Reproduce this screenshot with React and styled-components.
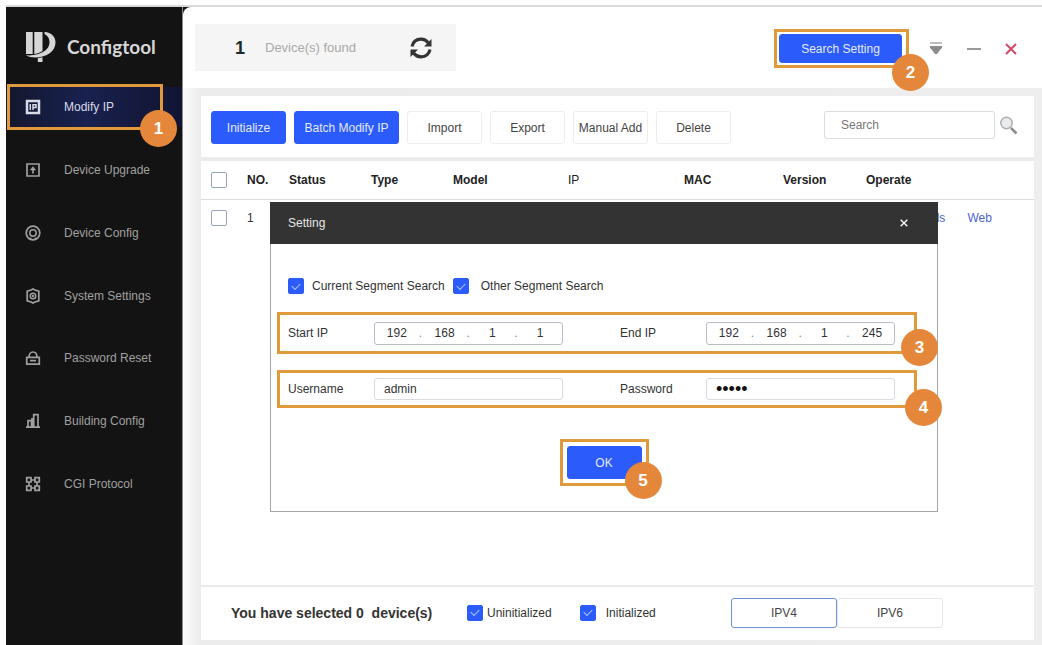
import React from "react";
import styled, { createGlobalStyle, css } from "styled-components";

const BLUE = "#2b5bfb";
const AMBER = "#e09a3c";

const GlobalStyle = createGlobalStyle`
  *, *::before, *::after { box-sizing: border-box; }
  body {
    margin: 0;
    background: #fff;
    font-family: "Liberation Sans", Arial, sans-serif;
    font-size: 12px;
    line-height: 16px;
    color: #333;
  }
  button, input { font: inherit; color: inherit; }
  button { cursor: pointer; }
  a { color: inherit; text-decoration: none; }
`;

const Page = styled.div`
  min-height: 100vh;
  padding: 5px 0 0 6px;
  display: flex;
`;

const Window = styled.div`
  flex: 1;
  display: flex;
  background: #131313;
  border-top: 2px solid #d9d9d9;
`;

/* ---------- Sidebar ---------- */

const Sidebar = styled.aside`
  width: 177px;
  flex: none;
  background: #131313;
  border-right: 1px solid #8a8a8a;
  color: #a0a0a0;
`;

const Brand = styled.div`
  height: 69px;
  padding: 10px 0 0 20px;
  display: flex;
  align-items: center;
  gap: 11px;
  color: #d6d6d6;
  font-family: Lato, "Liberation Sans", sans-serif;
  font-size: 19px;
  font-weight: 700;
  line-height: 24px;
`;

const Nav = styled.nav`
  height: 439px;
  display: flex;
  flex-direction: column;
`;

const NavRow = styled.div`
  flex: 1;
  display: flex;
  align-items: center;
`;

const NavLink = styled.a`
  position: relative;
  flex: 1;
  height: 40px;
  padding-left: 19px;
  display: flex;
  align-items: center;
  gap: 23px;
  ${(p) =>
    p.$active &&
    css`
      color: #d8dae6;
      background: linear-gradient(90deg, #14172e 0%, #18214f 45%, #14183a 80%, #101536 100%);
    `}
`;

/* ---------- Callouts ---------- */

const Frame = styled.span`
  position: absolute;
  inset: ${(p) => p.$inset};
  border: 3px solid ${AMBER};
  pointer-events: none;
`;

const Badge = styled.span`
  position: absolute;
  right: ${(p) => p.$right || "-20px"};
  bottom: ${(p) => p.$bottom || "-20px"};
  width: 37px;
  height: 37px;
  border-radius: 50%;
  background: #e5873a;
  color: #fff;
  font-size: 17px;
  font-weight: 700;
  line-height: 37px;
  text-align: center;
  z-index: 2;
`;

/* ---------- Main ---------- */

const Main = styled.main`
  flex: 1;
  min-width: 0;
  display: flex;
  flex-direction: column;
  background: #fff;
  border-top-left-radius: 8px;
`;

const TopBar = styled.header`
  height: 81px;
  padding: 2px 25px 0 12px;
  display: flex;
  align-items: center;
`;

const FoundBox = styled.div`
  width: 261px;
  height: 47px;
  margin-bottom: 2px;
  padding: 0 24px 0 40px;
  display: flex;
  align-items: center;
  background: #f5f5f5;
`;

const Count = styled.strong`
  width: 30px;
  font-size: 18px;
  color: #1d2b2b;
`;

const FoundLabel = styled.span`
  flex: 1;
  font-size: 13px;
  color: #a9a9a9;
`;

const IconButton = styled.button`
  display: flex;
  align-items: center;
  justify-content: center;
  padding: 0;
  border: 0;
  background: none;
  color: ${(p) => p.$color || "#333"};
`;

const WindowTools = styled.div`
  margin-left: auto;
  display: flex;
  align-items: center;
  gap: 27px;
`;

const WindowButtons = styled.div`
  display: flex;
  gap: 24px;
`;

const Marked = styled.div`
  position: relative;
  display: flex;
`;

const Button = styled.button`
  height: ${(p) => p.$height || 33}px;
  width: ${(p) => p.$width || 75}px;
  padding: 0;
  border-radius: 3px;
  border: 1px solid #ededed;
  background: #fff;
  color: #444;
  ${(p) =>
    p.$primary &&
    css`
      border-color: ${BLUE};
      background: ${BLUE};
      color: #e4eaff;
    `}
`;

const Content = styled.div`
  flex: 1;
  padding: 8px 8px 5px 18px;
  display: flex;
  background: linear-gradient(90deg, #fafafa 0, #ececec 18px, #eeeeee 100%);
`;

const Panel = styled.section`
  position: relative;
  flex: 1;
  min-width: 0;
  display: flex;
  flex-direction: column;
  background: #fff;
`;

const Toolbar = styled.div`
  height: 65px;
  padding: 15px 16px 0 10px;
  display: flex;
  align-items: flex-start;
  gap: 8px;
  border-bottom: 4px solid #ebebeb;
`;

const SearchBox = styled.form`
  margin-left: auto;
  display: flex;
  align-items: center;
  gap: 4px;
`;

const TextInput = styled.input`
  width: ${(p) => p.$width || 189}px;
  height: ${(p) => p.$height || 22}px;
  padding: 0 9px;
  border: 1px solid #d8dbe0;
  border-radius: 3px;
  background: #fff;
  outline: none;
`;

const SearchInput = styled(TextInput)`
  padding: 0 16px;
  &::placeholder { color: #777; opacity: 1; }
`;

const PasswordInput = styled(TextInput)`
  font-size: 18px;
  color: #111;
`;

const Table = styled.table`
  width: 100%;
  table-layout: fixed;
  border-collapse: collapse;
  th, td { padding: 0; text-align: left; white-space: nowrap; }
  th { height: 38px; color: #222; }
  thead tr { border-bottom: 1px solid #dcdcdc; }
  td { height: 37px; }
  th:first-child, td:first-child { padding-left: 10px; }
`;

const PlainHead = styled.th`
  font-weight: 400;
`;

const Links = styled.div`
  display: flex;
  gap: 22px;
  color: #4a63d6;
`;

const Check = styled.input`
  appearance: none;
  flex: none;
  display: inline-grid;
  place-items: center;
  vertical-align: middle;
  width: 16px;
  height: 16px;
  margin: 0;
  border: 1px solid #98a2b8;
  border-radius: 2px;
  background: #fff;
  &:checked { border-color: ${BLUE}; background: ${BLUE}; }
  &:checked::after {
    content: "";
    width: 8px;
    height: 5px;
    margin-bottom: 2px;
    border: solid #b9c9ff;
    border-width: 0 0 1px 1px;
    transform: rotate(-45deg);
  }
`;

const CheckLabel = styled.label`
  display: flex;
  align-items: center;
  gap: ${(p) => p.$gap || 10}px;
`;

const Footer = styled.footer`
  height: 55px;
  margin-top: auto;
  padding: 0 91px 2px 30px;
  display: flex;
  align-items: center;
  border-top: 2px solid #e9e9e9;
`;

const Summary = styled.strong`
  width: 236px;
  font-size: 14px;
  white-space: pre;
`;

const FilterGroup = styled.div`
  display: flex;
  gap: 28px;
`;

const Segments = styled.div`
  margin-left: auto;
  display: flex;
`;

const Segment = styled(Button)`
  border-color: ${(p) => (p.$on ? "#6f8fd8" : "#e6e6e6")};
`;

/* ---------- Dialog ---------- */

const Dialog = styled.div`
  position: absolute;
  top: 106px;
  left: 69px;
  right: 96px;
  height: 310px;
  border: 1px solid #a5a5a5;
  background: #fff;
`;

const DialogHead = styled.div`
  height: 42px;
  margin: -1px -1px 0;
  padding: 0 30px 0 18px;
  display: flex;
  align-items: center;
  justify-content: space-between;
  background: #333;
  color: #e6e6e6;
`;

const DialogChecks = styled.div`
  padding: 34px 0 18px 17px;
  display: flex;
  gap: 8px;
`;

const FieldRow = styled.div`
  height: ${(p) => p.$height}px;
  margin: 0 20px 16px 6px;
  padding: 0 19px 0 8px;
  position: relative;
  display: flex;
  align-items: center;
  justify-content: space-between;
  border: 3px solid ${AMBER};
`;

const Field = styled.div`
  display: flex;
  align-items: center;
  > label { width: 86px; }
`;

const IpBox = styled.div`
  width: 189px;
  height: 23px;
  display: flex;
  align-items: center;
  border: 1px solid #b9bdc9;
  border-radius: 3px;
  span { width: 4px; color: #888; }
`;

const Octet = styled.input`
  flex: 1;
  min-width: 0;
  width: 20px;
  height: 18px;
  padding: 0;
  border: 0;
  outline: none;
  background: none;
  text-align: center;
`;

const DialogFoot = styled.div`
  padding-top: 22px;
  display: flex;
  justify-content: center;
`;

/* ---------- Icons ---------- */

const Logo = () => (
  <svg width="30" height="32" viewBox="0 0 30 32" fill="currentColor" aria-hidden="true">
    <path d="M0 1h6.700v22H0z" />
    <path d="M8.300 1h8.200v30h-4.700v-8H8.300z" />
    <path
      d="M18.500 1C25.500 1.500 29.500 5.500 29.500 11.500 29.500 20 21 26.500 9 26.500 5.500 26.500 2.500 25.800 0 24.300c4 .4 8 0 11.500-1C19 21 23.500 17 23.500 11.300c0-3.800-1.800-6.800-5-8.300z"
      stroke="#131313"
      strokeWidth="1.600"
      paintOrder="stroke"
    />
  </svg>
);

const navProps = {
  width: 16,
  height: 16,
  viewBox: "0 0 16 16",
  fill: "none",
  stroke: "currentColor",
  strokeWidth: 1.5,
  "aria-hidden": true,
};

const IpIcon = () => (
  <svg {...navProps}>
    <path d="M2 2h12v12H2z" strokeWidth="2.500" />
    <path d="M5.300 5v6M8 11V5.700h3v2.800H8" />
  </svg>
);
const UpgradeIcon = () => (
  <svg {...navProps}>
    <path d="M2 2h12v12H2zM8 11.500V6" strokeWidth="1.700" />
    <path d="M8 4.200l3.200 4H4.800z" fill="currentColor" stroke="none" />
  </svg>
);
const ConfigIcon = () => (
  <svg {...navProps}>
    <circle cx="8" cy="8" r="6.800" strokeWidth="1.700" />
    <circle cx="8" cy="8" r="3.200" />
    <path d="M3.500 13.500h3M9.500 13.500h3" />
  </svg>
);
const SettingsIcon = () => (
  <svg {...navProps}>
    <path d="M8 1l2 1 3.800 1.200v9.600L10 14l-2 1-2-1-3.800-1.200V3.200L6 2z" strokeWidth="1.700" />
    <circle cx="8" cy="8" r="2.800" />
    <circle cx="8" cy="8" r=".5" />
  </svg>
);
const LockIcon = () => (
  <svg {...navProps}>
    <path d="M1.700 7.300h12.600v6.900H1.700zM4 7.300C4 4 5.500 2 8 2s4 2 4 5.300M5 10.700h6" strokeWidth="1.700" />
  </svg>
);
const BuildingIcon = () => (
  <svg {...navProps}>
    <path d="M8.700 1.700h4.300v12.300H8.700zM3 7.700h3.500V14H3zM1 14.200h14M7 5v9" strokeWidth="1.700" />
  </svg>
);
const ProtocolIcon = () => (
  <svg {...navProps}>
    <path d="M1.700 1.700H6V6H1.700zM10 1.700h4.300V6H10zM1.700 10H6v4.300H1.700zM10 10h4.300v4.300H10zM6 4h4M6 12h4M4 6v4M12 6v4" strokeWidth="1.700" />
  </svg>
);

const RefreshIcon = () => (
  <svg width="22" height="22" viewBox="0 0 22 22" aria-hidden="true">
    <g fill="none" stroke="#333" strokeWidth="3.200">
      <path d="M2 9.500C3 5 6.500 2.200 11 2.200c3 0 5.500 1.300 7.200 3.600" />
      <path d="M20 12.500c-1 4.500-4.500 7.300-9 7.300-3 0-5.500-1.300-7.200-3.600" />
    </g>
    <path d="M21.500 2v7.500H14zM.5 20v-7.500H8z" fill="#333" />
  </svg>
);

const DropIcon = () => (
  <svg width="14" height="13" viewBox="0 0 14 13" aria-hidden="true">
    <path d="M1 1h12" stroke="#aaa" strokeWidth="1.500" />
    <path d="M1 4h12v1.500L8 12H6L1 5.500z" fill="#8c8c8c" />
  </svg>
);

const MinusIcon = () => (
  <svg width="14" height="12" viewBox="0 0 14 12" aria-hidden="true">
    <path d="M0 6h14" stroke="#999" strokeWidth="2" />
  </svg>
);

const CloseIcon = ({ size = 12, width = 2 }) => (
  <svg width={size} height={size} viewBox="0 0 12 12" aria-hidden="true">
    <path d="M1 1l10 10M11 1 1 11" stroke="currentColor" strokeWidth={width} />
  </svg>
);

const SearchIcon = () => (
  <svg width="19" height="19" viewBox="0 0 19 19" fill="none" aria-hidden="true">
    <path d="M12 12l5.500 5.500" stroke="#8b8b8b" strokeWidth="2.500" />
    <circle cx="7.500" cy="7" r="5.700" fill="#e9ebed" stroke="#adadad" strokeWidth="1.500" />
  </svg>
);

/* ---------- Data ---------- */

const navItems = [
  ["Modify IP", IpIcon],
  ["Device Upgrade", UpgradeIcon],
  ["Device Config", ConfigIcon],
  ["System Settings", SettingsIcon],
  ["Password Reset", LockIcon],
  ["Building Config", BuildingIcon],
  ["CGI Protocol", ProtocolIcon],
];

const columnWidths = [46, 42, 82, 82, 115, 116, 99, 83];

function IpField({ id, label, value }) {
  return (
    <Field>
      <label htmlFor={id}>{label}</label>
      <IpBox>
        {value.map((part, i) => (
          <React.Fragment key={i}>
            {i > 0 && <span>.</span>}
            <Octet
              id={i === 0 ? id : undefined}
              aria-label={i === 0 ? undefined : `${label} part ${i + 1}`}
              defaultValue={part}
            />
          </React.Fragment>
        ))}
      </IpBox>
    </Field>
  );
}

function SettingDialog() {
  return (
    <Dialog role="dialog" aria-labelledby="dialog-title">
      <DialogHead>
        <span id="dialog-title">Setting</span>
        <IconButton type="button" aria-label="Close dialog" $color="#fff">
          <CloseIcon size={8} width={2} />
        </IconButton>
      </DialogHead>
      <DialogChecks>
        <CheckLabel $gap={8}>
          <Check type="checkbox" defaultChecked />
          Current Segment Search
        </CheckLabel>
        <CheckLabel $gap={12}>
          <Check type="checkbox" defaultChecked />
          Other Segment Search
        </CheckLabel>
      </DialogChecks>
      <FieldRow $height={42}>
        <IpField id="start-ip" label="Start IP" value={["192", "168", "1", "1"]} />
        <IpField id="end-ip" label="End IP" value={["192", "168", "1", "245"]} />
        <Badge $right="-24px" $bottom="-15px">3</Badge>
      </FieldRow>
      <FieldRow $height={38}>
        <Field>
          <label htmlFor="username">Username</label>
          <TextInput id="username" defaultValue="admin" />
        </Field>
        <Field>
          <label htmlFor="password">Password</label>
          <PasswordInput id="password" type="password" defaultValue="admin" />
        </Field>
        <Badge $right="-28px" $bottom="-21px">4</Badge>
      </FieldRow>
      <DialogFoot>
        <Marked>
          <Button type="button" $primary>OK</Button>
          <Frame $inset="-7px" />
          <Badge>5</Badge>
        </Marked>
      </DialogFoot>
    </Dialog>
  );
}

export default function App() {
  return (
    <Page>
      <GlobalStyle />
      <Window>
        <Sidebar>
          <Brand>
            <Logo />
            Configtool
          </Brand>
          <Nav>
            {navItems.map(([name, Icon], i) => (
              <NavRow key={name}>
                <NavLink href="#" $active={i === 0}>
                  <Icon />
                  {name}
                  {i === 0 && (
                    <>
                      <Frame $inset="-3px 19px -3px 1px" />
                      <Badge $right="5px">1</Badge>
                    </>
                  )}
                </NavLink>
              </NavRow>
            ))}
          </Nav>
        </Sidebar>
        <Main>
          <TopBar>
            <FoundBox>
              <Count>1</Count>
              <FoundLabel>Device(s) found</FoundLabel>
              <IconButton type="button" aria-label="Refresh">
                <RefreshIcon />
              </IconButton>
            </FoundBox>
            <WindowTools>
              <Marked>
                <Button type="button" $primary $width={123} $height={29}>Search Setting</Button>
                <Frame $inset="-5px -7px -5px -5px" />
                <Badge $right="-27px" $bottom="-28px">2</Badge>
              </Marked>
              <WindowButtons>
                <IconButton type="button" aria-label="Menu"><DropIcon /></IconButton>
                <IconButton type="button" aria-label="Minimize"><MinusIcon /></IconButton>
                <IconButton type="button" aria-label="Close" $color="#d34a66"><CloseIcon /></IconButton>
              </WindowButtons>
            </WindowTools>
          </TopBar>
          <Content>
            <Panel>
              <Toolbar>
                <Button type="button" $primary>Initialize</Button>
                <Button type="button" $primary $width={105}>Batch Modify IP</Button>
                <Button type="button">Import</Button>
                <Button type="button">Export</Button>
                <Button type="button">Manual Add</Button>
                <Button type="button">Delete</Button>
                <SearchBox>
                  <SearchInput aria-label="Search" placeholder="Search" $width={171} $height={28} />
                  <IconButton type="button" aria-label="Search devices"><SearchIcon /></IconButton>
                </SearchBox>
              </Toolbar>
              <Table>
                <colgroup>
                  {columnWidths.map((w, i) => (
                    <col key={i} width={w} />
                  ))}
                  <col />
                </colgroup>
                <thead>
                  <tr>
                    <th><Check type="checkbox" aria-label="Select all devices" /></th>
                    <th>NO.</th>
                    <th>Status</th>
                    <th>Type</th>
                    <th>Model</th>
                    <PlainHead>IP</PlainHead>
                    <th>MAC</th>
                    <th>Version</th>
                    <th>Operate</th>
                  </tr>
                </thead>
                <tbody>
                  <tr>
                    <td><Check type="checkbox" aria-label="Select device 1" /></td>
                    <td>1</td>
                    <td colSpan={6} />
                    <td>
                      <Links>
                        <a href="#">Edit</a>
                        <a href="#">Details</a>
                        <a href="#">Web</a>
                      </Links>
                    </td>
                  </tr>
                </tbody>
              </Table>
              <Footer>
                <Summary>{"You have selected 0  device(s)"}</Summary>
                <FilterGroup>
                  <CheckLabel $gap={4}>
                    <Check type="checkbox" defaultChecked />
                    Uninitialized
                  </CheckLabel>
                  <CheckLabel>
                    <Check type="checkbox" defaultChecked />
                    Initialized
                  </CheckLabel>
                </FilterGroup>
                <Segments>
                  <Segment type="button" $on $width={106} $height={30}>IPV4</Segment>
                  <Segment type="button" $width={106} $height={30}>IPV6</Segment>
                </Segments>
              </Footer>
              <SettingDialog />
            </Panel>
          </Content>
        </Main>
      </Window>
    </Page>
  );
}
